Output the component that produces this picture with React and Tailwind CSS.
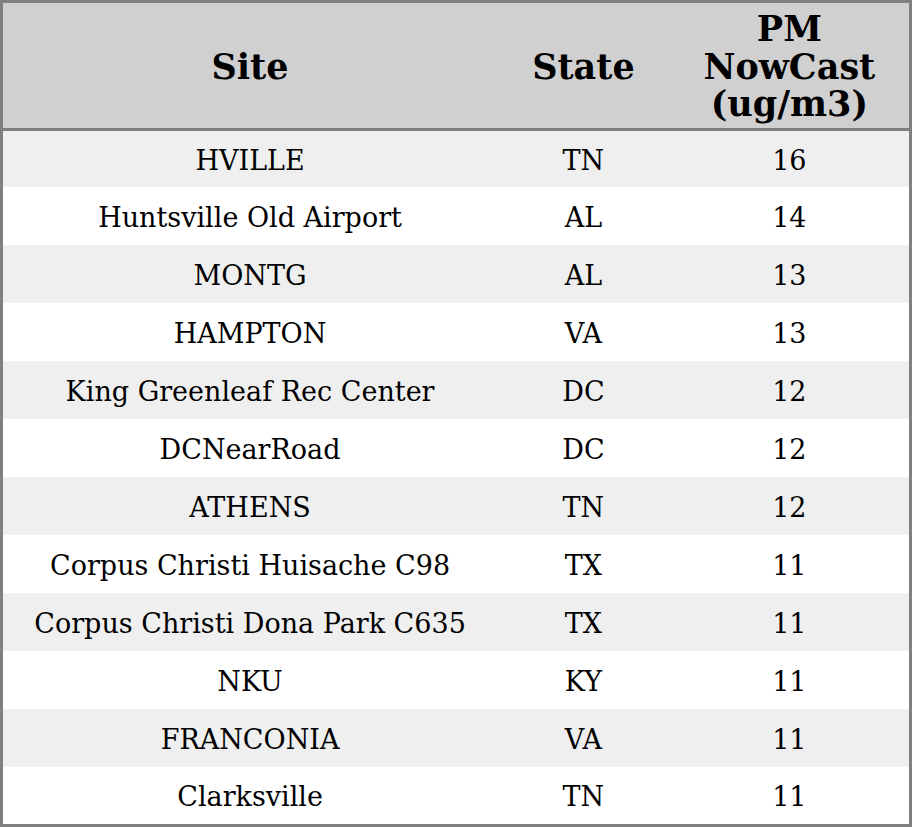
import React from 'react';

const rows = [
  ["HVILLE", "TN", 16],
  ["Huntsville Old Airport", "AL", 14],
  ["MONTG", "AL", 13],
  ["HAMPTON", "VA", 13],
  ["King Greenleaf Rec Center", "DC", 12],
  ["DCNearRoad", "DC", 12],
  ["ATHENS", "TN", 12],
  ["Corpus Christi Huisache C98", "TX", 11],
  ["Corpus Christi Dona Park C635", "TX", 11],
  ["NKU", "KY", 11],
  ["FRANCONIA", "VA", 11],
  ["Clarksville", "TN", 11],
];

export default function App() {
  return (
    <div className="w-[912px] h-[827px] bg-white" style={{ fontFamily: '"DejaVu Serif", serif' }}>
      <table className="w-[912px] table-fixed border-collapse border-[3px] border-[#808080] text-black">
        <colgroup>
          <col className="w-[494px]" />
          <col className="w-[172px]" />
          <col className="w-[240px]" />
        </colgroup>
        <thead>
          <tr className="bg-[#d0d0d0] border-b-[3px] border-[#808080]">
            <th className="text-[35px] font-bold leading-[37.5px] pt-[7px] pb-[5px] px-0 text-center align-middle">Site</th>
            <th className="text-[35px] font-bold leading-[37.5px] pt-[7px] pb-[5px] px-0 text-center align-middle">State</th>
            <th className="text-[35px] font-bold leading-[37.5px] pt-[7px] pb-[5px] px-0 text-center align-middle">
              PM<br />NowCast<br />(ug/m3)
            </th>
          </tr>
        </thead>
        <tbody>
          {rows.map(([site, state, pm], i) => {
            const pad =
              i === 0
                ? "pt-[16px] pb-[12px]"
                : i === rows.length - 1
                ? "pt-[16.5px] pb-[12.5px]"
                : "pt-[17px] pb-[13px]";
            return (
              <tr key={i} className={i % 2 === 0 ? "bg-[#efefef]" : "bg-white"}>
                <td className={`text-[27px] leading-[28px] text-center ${pad}`}>{site}</td>
                <td className={`text-[27px] leading-[28px] text-center ${pad}`}>{state}</td>
                <td className={`text-[27px] leading-[28px] text-center ${pad}`}>{pm}</td>
              </tr>
            );
          })}
        </tbody>
      </table>
    </div>
  );
}
